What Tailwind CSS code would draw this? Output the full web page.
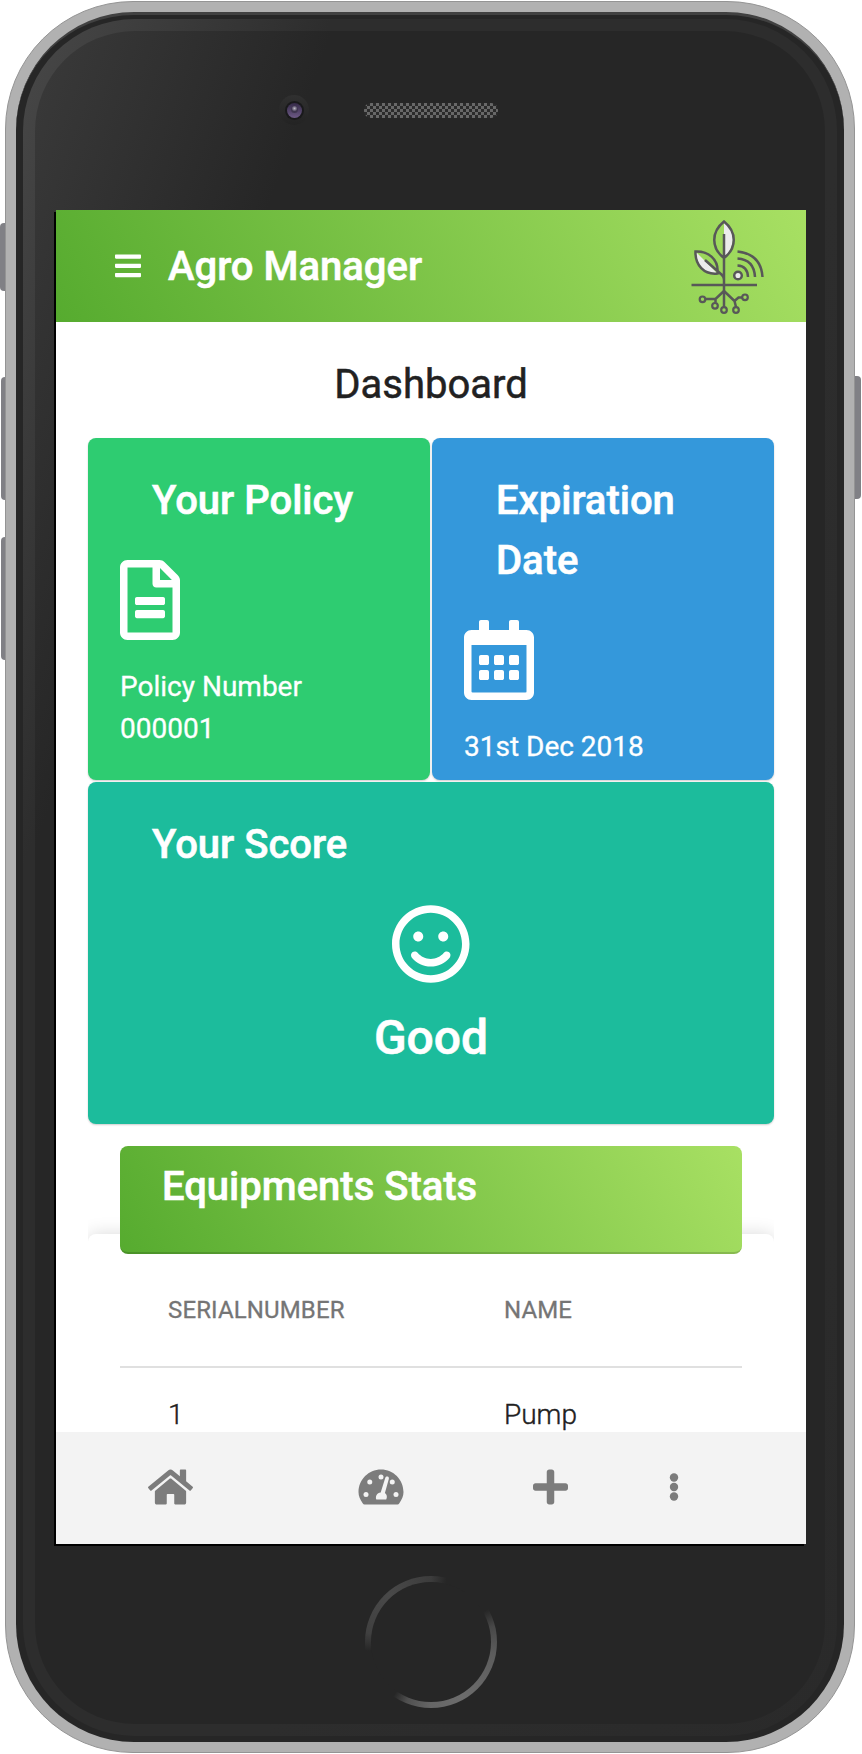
<!DOCTYPE html>
<html lang="en">
<head>
<meta charset="utf-8">
<title>Agro Manager</title>
<script src="https://cdn.jsdelivr.net/npm/@tailwindcss/browser@4"></script>
</head>
<body class="bg-white">
<div class="relative h-[1754px] w-[862px] overflow-hidden font-['Roboto',sans-serif]">
  <!-- side buttons -->
  <div class="absolute left-0 top-[223px] h-[68px] w-3 rounded-[4px] bg-[#808085]"></div>
  <div class="absolute left-px top-[377px] h-[123px] w-3 rounded-[4px] bg-[#808085]"></div>
  <div class="absolute left-px top-[537px] h-[123px] w-3 rounded-[4px] bg-[#808085]"></div>
  <div class="absolute right-[1px] top-[376px] h-[123px] w-3 rounded-[4px] bg-[#808085]"></div>

  <!-- phone body -->
  <div class="absolute left-[5px] top-px h-[1752px] w-[850px] rounded-[128px] border border-[#949494] bg-[#b1b1b1] px-[10px] py-[10px]">
    <div class="h-full rounded-[118px] border-t-[3px] border-[#414141] bg-[#262626] px-[7px] pt-[4px] pb-[6px]">
      <div class="h-full rounded-[112px] bg-[linear-gradient(110deg,#484848_0px,#2d2d2d_290px,#2d2d2d_60%,#2a2a2a_100%)] p-[12px]">
        <div class="flex h-full flex-col rounded-[100px] bg-[linear-gradient(110deg,#3a3a3a_0px,#262626_280px)]">

          <div class="relative h-[179px] shrink-0">
            <div class="absolute left-[244px] top-[64px] flex size-[30px] items-center justify-center rounded-full bg-[linear-gradient(#303030,#232323)]">
              <div class="flex size-[19px] items-center justify-center rounded-full bg-[#19191b]">
                <div class="flex size-[15px] items-start justify-center rounded-full bg-[linear-gradient(#352a48,#6d5a86)] pt-[3px]">
                  <div class="size-[7px] rounded-full bg-[radial-gradient(circle_at_50%_35%,#c0bcc8_0px,#3f3650_3px)]"></div>
                </div>
              </div>
            </div>
            <svg class="absolute left-[329px] top-[72px]" width="134" height="15" viewBox="0 0 134 15">
              <defs>
                <pattern id="mesh" width="6" height="6" patternUnits="userSpaceOnUse"><rect width="6" height="6" fill="#2b2b2b"/><rect width="3" height="3" fill="#686868"/><rect x="3" y="3" width="3" height="3" fill="#686868"/></pattern>
              </defs>
              <rect width="134" height="15" rx="7" fill="url(#mesh)"/>
            </svg>
          </div>

          <!-- screen -->
          <div class="ml-[21px] flex h-[1334px] w-[750px] shrink-0 flex-col bg-white shadow-[-2px_2px_0_#000]">
            <header class="flex h-[112px] shrink-0 items-center bg-[linear-gradient(60deg,#56ab2f,#a8e063)] pl-[59px] pr-[42px] text-white">
              <svg class="w-[26px]" viewBox="0 0 448 512" fill="currentColor"><path d="M16 132h416c8.837 0 16-7.163 16-16V76c0-8.837-7.163-16-16-16H16C7.163 60 0 67.163 0 76v40c0 8.837 7.163 16 16 16zm0 160h416c8.837 0 16-7.163 16-16v-40c0-8.837-7.163-16-16-16H16c-8.837 0-16 7.163-16 16v40c0 8.837 7.163 16 16 16zm0 160h416c8.837 0 16-7.163 16-16v-40c0-8.837-7.163-16-16-16H16c-8.837 0-16 7.163-16 16v40c0 8.837 7.163 16 16 16z"/></svg>
              <h1 class="ml-[27px] grow pt-[2px] text-[40px] leading-[60px] font-medium [-webkit-text-stroke:0.6px_white]">Agro Manager</h1>
              <svg class="w-[74px]" viewBox="0 0 74 96" fill="none" stroke="#585858" stroke-width="2.5">
                <path d="M34 3.500C45 13 47 27 34 40Z" fill="#ececec" stroke="none"/>
                <path d="M5.500 33.500C6 47 14 56 27.500 55.500Z" fill="#ececec" stroke="none"/>
                <path d="M34 3.500C47 14 47 30 34 40C21 30 21 14 34 3.500ZM34 16V90M5.500 33.500C18 33 29 41 27.500 55.500C14 57 5 47 5.500 33.500ZM15 42L32 57Q34 59 34 62M1.500 67H67"/>
                <circle cx="48" cy="57.500" r="3.800" fill="#ececec"/>
                <path d="M47.500 47.500Q57.500 48 58 59M47.500 40.500Q64 41.500 65 59M47.500 33.500Q71 36 72.500 59M34 73L25.500 81H16M25.500 81V84.500M34 73L44.500 83L48.500 79.500H52M44.500 83L46 89"/>
                <g stroke-width="2.200"><circle cx="12.500" cy="81.300" r="2.800"/><circle cx="25" cy="87.800" r="2.800"/><circle cx="34" cy="92" r="2.800"/><circle cx="46" cy="92" r="2.800"/><circle cx="55" cy="79.300" r="2.800"/></g>
              </svg>
            </header>

            <main class="flex h-[1110px] shrink-0 flex-col overflow-hidden px-8 text-white">
              <h2 class="mt-[33px] h-[83px] shrink-0 text-center text-[40px] leading-[60px] text-[#212121] font-normal [-webkit-text-stroke:0.5px_#212121]">Dashboard</h2>
              <div class="grid shrink-0 grid-cols-2 gap-[2px]">
                <section class="h-[342px] rounded-[8px] bg-[#2ecc71] px-8 pt-[33px] shadow-[0_1px_2px_#0003]">
                  <h3 class="px-8 text-[40px] leading-[60px] font-medium [-webkit-text-stroke:0.6px_white]">Your Policy</h3>
                  <svg class="mt-[29px] h-[80px] w-[60px]" viewBox="0 0 384 512" fill="currentColor"><path d="M288 248v28c0 6.600-5.400 12-12 12H108c-6.600 0-12-5.400-12-12v-28c0-6.600 5.400-12 12-12h168c6.600 0 12 5.400 12 12zm-12 72H108c-6.600 0-12 5.400-12 12v28c0 6.600 5.400 12 12 12h168c6.600 0 12-5.400 12-12v-28c0-6.600-5.400-12-12-12zm108-188.100V464c0 26.500-21.500 48-48 48H48c-26.500 0-48-21.500-48-48V48C0 21.500 21.500 0 48 0h204.100C264.800 0 277 5.100 286 14.100L369.900 98c9 8.900 14.100 21.200 14.100 33.900zm-128-80V128h76.100L256 51.900zM336 464V176H232c-13.300 0-24-10.700-24-24V48H48v416h288z"/></svg>
                  <p class="mt-[26px] text-[28px] leading-[42px] [-webkit-text-stroke:0.3px_white]">Policy Number<br>000001</p>
                </section>
                <section class="h-[342px] rounded-[8px] bg-[#3498db] px-8 pt-[33px] shadow-[0_1px_2px_#0003]">
                  <h3 class="px-8 text-[40px] leading-[60px] font-medium [-webkit-text-stroke:0.6px_white]">Expiration Date</h3>
                  <svg class="mt-[29px] h-[80px] w-[70px]" viewBox="0 0 448 512" fill="currentColor"><path d="M148 288h-40c-6.600 0-12-5.400-12-12v-40c0-6.600 5.400-12 12-12h40c6.600 0 12 5.400 12 12v40c0 6.600-5.400 12-12 12zm108-12v-40c0-6.600-5.400-12-12-12h-40c-6.600 0-12 5.400-12 12v40c0 6.600 5.400 12 12 12h40c6.600 0 12-5.400 12-12zm96 0v-40c0-6.600-5.400-12-12-12h-40c-6.600 0-12 5.400-12 12v40c0 6.600 5.400 12 12 12h40c6.600 0 12-5.400 12-12zm-96 96v-40c0-6.600-5.400-12-12-12h-40c-6.600 0-12 5.400-12 12v40c0 6.600 5.400 12 12 12h40c6.600 0 12-5.400 12-12zm-96 0v-40c0-6.600-5.400-12-12-12h-40c-6.600 0-12 5.400-12 12v40c0 6.600 5.400 12 12 12h40c6.600 0 12-5.400 12-12zm192 0v-40c0-6.600-5.400-12-12-12h-40c-6.600 0-12 5.400-12 12v40c0 6.600 5.400 12 12 12h40c6.600 0 12-5.400 12-12zm96-260v352c0 26.500-21.500 48-48 48H48c-26.500 0-48-21.500-48-48V112c0-26.500 21.500-48 48-48h48V12c0-6.600 5.400-12 12-12h40c6.600 0 12 5.400 12 12v52h128V12c0-6.600 5.400-12 12-12h40c6.600 0 12 5.400 12 12v52h48c26.500 0 48 21.500 48 48zm-48 346V160H48v298c0 3.300 2.700 6 6 6h340c3.300 0 6-2.700 6-6z"/></svg>
                  <p class="mt-[26px] text-[28px] leading-[42px] [-webkit-text-stroke:0.3px_white]">31st Dec 2018</p>
                </section>
                <section class="col-span-2 flex h-[342px] flex-col items-center rounded-[8px] bg-[#1cbc9c] px-8 pt-[33px] shadow-[0_1px_2px_#0003]">
                  <h3 class="w-full px-8 text-[40px] leading-[60px] font-medium [-webkit-text-stroke:0.6px_white]">Your Score</h3>
                  <svg class="mt-[29px] h-[80px]" viewBox="0 0 496 512" fill="currentColor"><path d="M248 8C111 8 0 119 0 256s111 248 248 248 248-111 248-248S385 8 248 8zm0 448c-110.300 0-200-89.700-200-200S137.700 56 248 56s200 89.700 200 200-89.700 200-200 200zm-80-216c17.700 0 32-14.300 32-32s-14.300-32-32-32-32 14.300-32 32 14.300 32 32 32zm160 0c17.700 0 32-14.300 32-32s-14.300-32-32-32-32 14.300-32 32 14.300 32 32 32zm4 72.600c-20.800 25-51.500 39.400-84 39.400s-63.200-14.300-84-39.400c-8.500-10.200-23.700-11.500-33.800-3.100-10.200 8.500-11.500 23.600-3.100 33.800 30 36 74.100 56.600 120.900 56.600s90.900-20.600 120.900-56.600c8.500-10.200 7.100-25.300-3.100-33.800-10.100-8.400-25.300-7.100-33.800 3.100z"/></svg>
                  <p class="mt-[18px] text-[48px] leading-[72px] font-medium [-webkit-text-stroke:0.6px_white]">Good</p>
                </section>
              </div>
              <section class="mt-[4px] shrink-0 overflow-hidden pt-[106px]">
                <div class="h-[260px] rounded-[8px] bg-white px-8 shadow-[0_0_18px_#00000026]">
                  <div class="relative -top-[88px] h-[108px] rounded-[8px] border-b-2 border-black/15 bg-[linear-gradient(60deg,#56ab2f,#a8e063)] bg-origin-border px-[42px] pt-[11px]">
                    <h3 class="text-[40px] leading-[60px] font-medium [-webkit-text-stroke:0.6px_white]">Equipments Stats</h3>
                  </div>
                  <div class="-mt-[88px] grid h-[114px] grid-cols-[336px_1fr] border-b-2 border-[#e0e0e0] pt-[38px] pl-12 text-[24px] leading-[36px] tracking-[0.13px] text-[#757575] [-webkit-text-stroke:0.3px_#757575]">
                    <span>SERIALNUMBER</span><span>NAME</span>
                  </div>
                  <div class="grid grid-cols-[336px_1fr] pt-[26px] pl-12 text-[28px] leading-[42px] text-[#212121] font-light [-webkit-text-stroke:0.4px_#212121]">
                    <span>1</span><span>Pump</span>
                  </div>
                </div>
              </section>
            </main>

            <nav class="flex h-[112px] shrink-0 items-center bg-[#f3f3f3] pb-[2px] pl-[92px] text-[#7c7c7c]">
              <svg class="h-[40px] w-[45px]" viewBox="0 0 576 512" fill="currentColor"><path d="M488 312.700V456c0 13.300-10.700 24-24 24H348c-6.600 0-12-5.400-12-12V356c0-6.600-5.400-12-12-12h-72c-6.600 0-12 5.400-12 12v112c0 6.600-5.400 12-12 12H112c-13.300 0-24-10.700-24-24V312.700c0-3.600 1.600-7 4.400-9.300l188-154.800c4.400-3.600 10.800-3.600 15.300 0l188 154.800c2.700 2.300 4.300 5.700 4.300 9.300zm83.600-60.900L488 182.900V44.400c0-6.600-5.400-12-12-12h-56c-6.600 0-12 5.400-12 12V117l-89.500-73.700c-17.700-14.600-43.300-14.600-61 0L4.400 251.800c-5.100 4.200-5.800 11.800-1.600 16.900l25.500 31c4.200 5.100 11.800 5.800 16.900 1.600l235.200-193.700c4.400-3.600 10.800-3.600 15.300 0l235.200 193.700c5.100 4.200 12.700 3.500 16.900-1.600l25.500-31c4.200-5.200 3.400-12.700-1.700-16.900z"/></svg>
              <svg class="ml-[165px] h-[40px] w-[46px]" viewBox="0 0 576 512" fill="currentColor">
                <path d="M75.700 480h424.600c8 0 16-4 20-12 36-54 55.700-92 55.700-148C576 161 447 32 288 32S0 161 0 320c0 56 20 94 55.700 148 4 8 12 12 20 12z"/>
                <g fill="#f3f3f3"><circle cx="96" cy="352" r="32"/><circle cx="144" cy="192" r="32"/><circle cx="288" cy="128" r="32"/><circle cx="432" cy="192" r="32"/><circle cx="480" cy="352" r="32"/><path d="M343 138c5-13 18-19 30-15 13 4 20 17 15 30l-50 180c30 20 30 62 16 83H228c-16-40 8-86 56-91z"/></g>
              </svg>
              <svg class="ml-[129px] h-[40px] w-[35px]" viewBox="0 0 448 512" fill="currentColor"><path d="M416 208H272V64c0-17.670-14.330-32-32-32h-32c-17.670 0-32 14.330-32 32v144H32c-17.670 0-32 14.330-32 32v32c0 17.670 14.330 32 32 32h144v144c0 17.670 14.330 32 32 32h32c17.670 0 32-14.330 32-32V304h144c17.670 0 32-14.330 32-32v-32c0-17.670-14.330-32-32-32z"/></svg>
              <svg class="ml-[101px] h-[28px] w-[10px]" viewBox="0 0 10 28" fill="currentColor"><circle cx="5" cy="4.500" r="4.200"/><circle cx="5" cy="14" r="4.200"/><circle cx="5" cy="23.500" r="4.200"/></svg>
            </nav>
          </div>

          <!-- home button -->
          <div class="mt-[32px] ml-[330px] flex size-[132px] items-center justify-center rounded-full bg-[conic-gradient(#3c3c3c_0deg,#262626_14deg,#262626_60deg,#484848_76deg,#5c5c5c_100deg,#6c6c6c_150deg,#666666_180deg,#505050_202deg,#262626_215deg,#262626_262deg,#404040_278deg,#494949_320deg,#3c3c3c_360deg)]">
            <div class="size-[120px] rounded-full bg-[#262626]"></div>
          </div>
        </div>
      </div>
    </div>
  </div>
</div>
</body>
</html>
